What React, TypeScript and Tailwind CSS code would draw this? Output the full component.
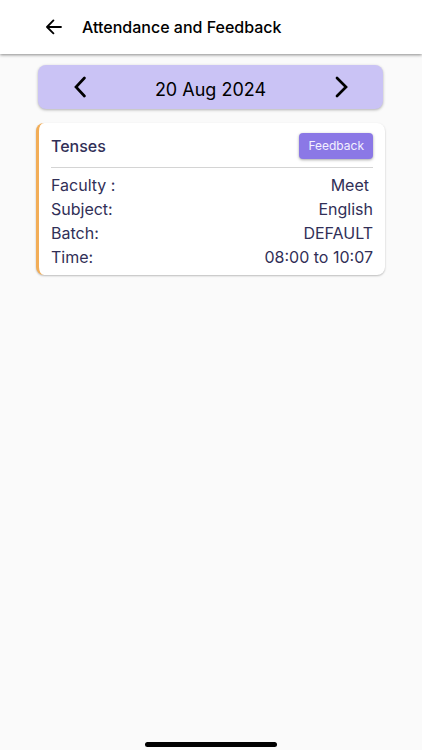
import { useState } from 'react'

type SessionType = {
  topic: string
  details: { label: string; value: string; className?: string }[]
}

const session: SessionType = {
  topic: 'Tenses',
  details: [
    { label: 'Faculty :', value: 'Meet', className: 'pr-1' },
    { label: 'Subject:', value: 'English' },
    { label: 'Batch:', value: 'DEFAULT' },
    { label: 'Time:', value: '08:00 to 10:07' },
  ],
}

const BackIcon = () => (
  <svg width="16" height="16" viewBox="0 0 16 16" fill="none" stroke="currentColor" strokeWidth="1.8" strokeLinecap="round" strokeLinejoin="round" aria-hidden="true">
    <path d="M15 8H1.2M7.4 1.4L1 8l6.4 6.4" />
  </svg>
)

const ChevronIcon = ({ d }: { d: string }) => (
  <svg width="14" height="22" viewBox="0 0 14 22" fill="none" stroke="currentColor" strokeWidth="2.7" strokeLinecap="round" strokeLinejoin="miter" aria-hidden="true">
    <path d={d} />
  </svg>
)

const formatDate = (date: Date) =>
  date.toLocaleDateString('en-GB', {
    day: 'numeric',
    month: 'short',
    year: 'numeric',
  })

const App = () => {
  const [date, setDate] = useState<Date>(new Date(2024, 7, 20))

  const changeDay = (days: number) => {
    const next = new Date(date)
    next.setDate(next.getDate() + days)
    setDate(next)
  }

  return (
    <div className="flex min-h-screen flex-col bg-[#fafafa] font-['Inter',sans-serif] text-black">
      <header className="flex h-[54px] items-center gap-5 bg-white pl-[46px] shadow-[0_1px_3px_rgba(0,0,0,0.45)]">
        <button type="button" aria-label="Back">
          <BackIcon />
        </button>
        <h1 className="text-base font-medium">Attendance and Feedback</h1>
      </header>

      <main className="flex flex-col pt-[11px] pr-[37px] pl-9">
        <div className="mx-0.5 flex h-11 items-center justify-between rounded-lg bg-[#cac3f5] px-[34px] shadow-[0_1px_3px_rgba(0,0,0,0.3)]">
          <button type="button" aria-label="Previous day" onClick={() => changeDay(-1)}>
            <ChevronIcon d="M12.4 2L4 11l8.4 9" />
          </button>
          <p className="pt-1.5 text-lg">{formatDate(date)}</p>
          <button type="button" aria-label="Next day" onClick={() => changeDay(1)}>
            <ChevronIcon d="M2 2l9 9-9 9" />
          </button>
        </div>

        <section className="mt-3.5 rounded-lg border-l-[3px] border-[#f2ad57] bg-white pt-2.5 pr-3 pb-1.5 pl-3 text-[#312f57] shadow-[0_1px_2px_rgba(0,0,0,0.25)]">
          <div className="flex items-center justify-between border-b border-[#d4d4d4] pb-2">
            <h2 className="text-base font-medium">{session.topic}</h2>
            <button
              type="button"
              className="h-[26px] rounded bg-[#8b78e6] px-[9px] text-xs text-[#f3f0ff] shadow-[0_1px_3px_rgba(0,0,0,0.35)]"
            >
              Feedback
            </button>
          </div>
          <dl className="mt-[5px] text-base">
            {session.details.map(({ label, value, className }) => (
              <div key={label} className="flex justify-between">
                <dt>{label}</dt>
                <dd className={className}>{value}</dd>
              </div>
            ))}
          </dl>
        </section>
      </main>

      <div className="mt-auto mb-[3px] h-[5px] w-[132px] self-center rounded-full bg-black" />
    </div>
  )
}

export default App
